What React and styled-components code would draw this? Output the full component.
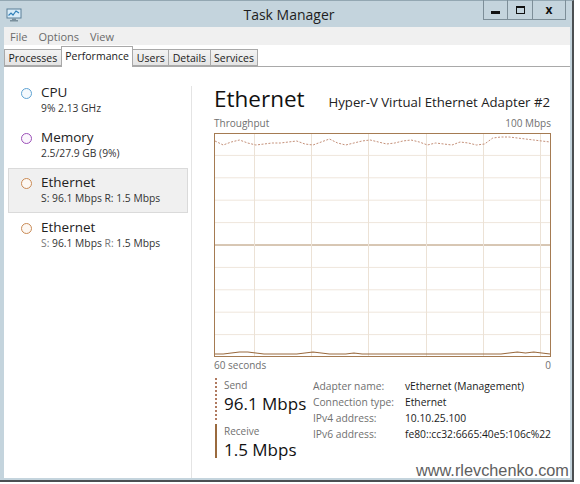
import React from 'react';
import styled, { createGlobalStyle } from 'styled-components';

const GlobalStyle = createGlobalStyle`
  html, body {
    margin: 0;
    background: #ffffff;
  }
  body {
    font-family: "Open Sans", "Noto Sans", sans-serif;
    color: #222;
  }
`;

const Screen = styled.div`
  position: relative;
  width: 580px;
  height: 484px;
  overflow: hidden;
`;

const Window = styled.div`
  width: 574px;
  height: 482px;
  box-sizing: border-box;
  background: #c4d4dd;
  border-top: 1px solid #93a7b2;
  border-right: 2px solid #4b4f52;
  border-bottom: 2px solid #4b4f52;
  padding: 0 2px 2px 4px;
  display: flex;
  flex-direction: column;
`;

const TitleBar = styled.div`
  height: 26px;
  display: grid;
  grid-template-columns: 1fr auto 1fr;
  align-items: center;
`;

const AppIcon = styled.div`
  display: flex;
  padding-left: 2px;
  padding-top: 2px;
`;

const Title = styled.div`
  font-size: 14px;
  color: #1e1e1e;
  padding-top: 1px;
  padding-left: 4px;
`;

const Controls = styled.div`
  justify-self: end;
  align-self: start;
  display: flex;
  height: 19px;
  margin-top: -1px;
  margin-right: 4px;
  border: 1px solid #7d8e98;
  border-top: none;
`;

const ControlButton = styled.div`
  width: ${p => p.$w}px;
  display: flex;
  align-items: center;
  justify-content: center;
  border-left: ${p => (p.$first ? 'none' : '1px solid #7d8e98')};
  font-size: 12px;
  font-weight: 700;
  color: #111;
`;

const MinBar = styled.div`
  width: 9px;
  height: 3px;
  background: #111;
  margin-top: 5px;
`;

const MaxBox = styled.div`
  width: 7px;
  height: 5px;
  border: 1px solid #111;
  border-top-width: 2px;
`;

const MenuBar = styled.div`
  height: 18px;
  background: #f0f0f0;
  display: flex;
  align-items: center;
  gap: 11px;
  padding-left: 6px;
  font-size: 11px;
  color: #6a6a6a;
`;

const TabStrip = styled.div`
  height: 22px;
  background: #ffffff;
  display: flex;
  align-items: flex-end;
  padding-left: 1px;
  border-bottom: 1px solid #a9a9a9;
  box-sizing: border-box;
`;

const Tab = styled.div`
  height: ${p => (p.$active ? 21 : 17)}px;
  box-sizing: border-box;
  padding: 0 3.5px;
  margin-left: -1px;
  margin-bottom: ${p => (p.$active ? -1 : 0)}px;
  display: flex;
  align-items: center;
  font-size: 10.5px;
  color: #1a1a1a;
  border: 1px solid #a9a9a9;
  border-bottom: ${p => (p.$active ? 'none' : '1px solid #a9a9a9')};
  background: ${p => (p.$active ? '#ffffff' : 'linear-gradient(#f3f3f3, #e4e4e4)')};
  position: relative;
  z-index: ${p => (p.$active ? 1 : 0)};
  padding-bottom: ${p => (p.$active ? 3 : 0)}px;
`;

const Body = styled.div`
  flex: 1;
  background: #ffffff;
  display: flex;
`;

const Sidebar = styled.div`
  width: 187px;
  flex-shrink: 0;
  padding-top: 11px;
  display: flex;
  flex-direction: column;
  align-items: flex-start;
`;

const Divider = styled.div`
  width: 1px;
  flex-shrink: 0;
  margin-top: 19px;
  background: #e4e4e4;
`;

const Item = styled.div`
  width: 180px;
  height: 45px;
  margin-left: 4px;
  box-sizing: border-box;
  padding: 4px 0 0 12px;
  display: flex;
  gap: 9px;
  background: ${p => (p.$selected ? '#f0f0f0' : 'transparent')};
  border: 1px solid ${p => (p.$selected ? '#dadada' : 'transparent')};
`;

const Dot = styled.div`
  width: 9px;
  height: 9px;
  margin-top: 5px;
  border-radius: 50%;
  border: 1.3px solid ${p => p.$color};
  background: ${p => p.$fill};
`;

const ItemText = styled.div`
  display: flex;
  flex-direction: column;
`;

const ItemTitle = styled.div`
  font-size: 13.5px;
  line-height: 18px;
  color: #222;
`;

const ItemSub = styled.div`
  font-size: 10.3px;
  line-height: 14px;
  color: #333;
`;

const Dim = styled.span`
  color: #777;
`;

const Main = styled.div`
  flex: 1;
  min-width: 0;
  padding: 16px 19px 0 22px;
  display: flex;
  flex-direction: column;
`;

const Header = styled.div`
  display: flex;
  justify-content: space-between;
  align-items: baseline;
`;

const BigTitle = styled.div`
  font-size: 22.5px;
  line-height: 32px;
  color: #111;
`;

const Adapter = styled.div`
  font-size: 13.2px;
  color: #222;
  padding-right: 1px;
`;

const AxisRow = styled.div`
  display: flex;
  justify-content: space-between;
  font-size: 10px;
  line-height: 13px;
  color: #707070;
  margin-top: ${p => p.$mt}px;
`;

const Graph = styled.svg`
  display: block;
  margin-top: 3px;
`;

const Details = styled.div`
  display: flex;
  margin-top: 6px;
`;

const Rates = styled.div`
  width: 99px;
  display: flex;
  flex-direction: column;
  gap: 4px;
`;

const Rate = styled.div`
  padding-left: 7px;
  border-left: 2px ${p => (p.$dotted ? 'dotted #b07a60' : 'solid #9a6a3e')};
  margin-left: 1px;
  height: ${p => p.$h}px;
`;

const RateLabel = styled.div`
  font-size: 10px;
  line-height: 14px;
  color: #707070;
`;

const RateValue = styled.div`
  font-size: 17px;
  line-height: 24px;
  color: #111;
`;

const InfoGrid = styled.div`
  display: grid;
  grid-template-columns: 92px auto;
  grid-auto-rows: 16px;
  align-items: center;
  font-size: 10.3px;
  align-self: flex-start;
`;

const InfoLabel = styled.div`
  color: #707070;
`;

const InfoValue = styled.div`
  color: #1a1a1a;
`;

const Watermark = styled.div`
  position: absolute;
  left: 416px;
  top: 461px;
  font-family: "Liberation Sans", Arial, sans-serif;
  font-size: 16.3px;
  color: #5e5e5e;
`;

const items = [
  { title: 'CPU', sub: '9% 2.13 GHz', color: '#5fa3d3', fill: '#f4f9fd' },
  { title: 'Memory', sub: '2.5/27.9 GB (9%)', color: '#9b4fb8', fill: '#fbf6fd' },
  { title: 'Ethernet', rate: true, color: '#c98a55', fill: '#fdf8f3', selected: true },
  { title: 'Ethernet', rate: true, color: '#c98a55', fill: '#fdf8f3', dim: true },
];

const info = [
  ['Adapter name:', 'vEthernet (Management)'],
  ['Connection type:', 'Ethernet'],
  ['IPv4 address:', '10.10.25.100'],
  ['IPv6 address:', 'fe80::cc32:6665:40e5:106c%22'],
];

const GW = 337;
const GH = 224;
const sendVals = [8, 12, 9, 7, 10, 12, 11, 10, 10, 9, 8, 11, 12, 9, 6, 10, 12, 10, 8, 7, 9, 11, 10, 8, 7, 9, 12, 10, 11, 12, 9, 10, 12, 11, 5, 4, 4, 5, 6, 7, 8, 9];
const recvVals = [221, 221, 220, 219, 219, 220, 221, 221, 221, 221, 221, 220, 219, 220, 221, 221, 221, 220, 221, 221, 221, 221, 221, 221, 221, 221, 221, 221, 221, 221, 221, 221, 221, 221, 221, 221, 220, 219, 220, 219, 220, 221];

function line(vals) {
  const step = (GW - 2) / (vals.length - 1);
  return vals.map((v, i) => `${(1 + i * step).toFixed(1)},${v}`).join(' ');
}

function ThroughputGraph() {
  const rows = [];
  for (let i = 1; i < 10; i++) rows.push(i * (GH / 10));
  const cols = [40, 97, 154, 212, 269, 326];
  return (
    <Graph width={GW} height={GH}>
      {rows.map(y => (
        <line key={y} x1="0" x2={GW} y1={y} y2={y} stroke={y === GH / 2 ? '#b08e68' : '#efe6dc'} strokeWidth="1" />
      ))}
      {cols.map(x => (
        <line key={x} x1={x + 0.5} x2={x + 0.5} y1="0" y2={GH} stroke="#ece2d6" strokeWidth="1" />
      ))}
      <polyline points={line(sendVals)} fill="none" stroke="#c49079" strokeWidth="1" strokeDasharray="2 1.5" />
      <polyline points={line(recvVals)} fill="none" stroke="#9a6a3e" strokeWidth="1.2" />
      <rect x="0.5" y="0.5" width={GW - 1} height={GH - 1} fill="none" stroke="#a57b52" strokeWidth="1" />
    </Graph>
  );
}

export default function App() {
  return (
    <Screen>
      <GlobalStyle />
      <Window>
        <TitleBar>
          <AppIcon>
            <svg width="16" height="14" viewBox="0 0 16 14">
              <rect x="1" y="1" width="14" height="9" fill="#d9ecf8" stroke="#5a7f98" />
              <polyline points="2.5,7.5 5,5 7,7 10,3 13,5" fill="none" stroke="#2f7fb8" strokeWidth="1.2" />
              <rect x="6" y="10.5" width="4" height="1.5" fill="#7a8f9c" />
              <rect x="4" y="12" width="8" height="1.5" fill="#7a8f9c" />
            </svg>
          </AppIcon>
          <Title>Task Manager</Title>
          <Controls>
            <ControlButton $w={23} $first>
              <MinBar />
            </ControlButton>
            <ControlButton $w={24}>
              <MaxBox />
            </ControlButton>
            <ControlButton $w={32}>x</ControlButton>
          </Controls>
        </TitleBar>
        <MenuBar>
          <span>File</span>
          <span>Options</span>
          <span>View</span>
        </MenuBar>
        <TabStrip>
          <Tab>Processes</Tab>
          <Tab $active>Performance</Tab>
          <Tab>Users</Tab>
          <Tab>Details</Tab>
          <Tab>Services</Tab>
        </TabStrip>
        <Body>
          <Sidebar>
            {items.map((it, i) => (
              <Item key={i} $selected={it.selected}>
                <Dot $color={it.color} $fill={it.fill} />
                <ItemText>
                  <ItemTitle>{it.title}</ItemTitle>
                  <ItemSub>
                    {it.rate ? (
                      it.dim ? (
                        <>
                          <Dim>S:</Dim> 96.1 Mbps <Dim>R:</Dim> 1.5 Mbps
                        </>
                      ) : (
                        'S: 96.1 Mbps R: 1.5 Mbps'
                      )
                    ) : (
                      it.sub
                    )}
                  </ItemSub>
                </ItemText>
              </Item>
            ))}
          </Sidebar>
          <Divider />
          <Main>
            <Header>
              <BigTitle>Ethernet</BigTitle>
              <Adapter>Hyper-V Virtual Ethernet Adapter #2</Adapter>
            </Header>
            <AxisRow $mt={2}>
              <span>Throughput</span>
              <span>100 Mbps</span>
            </AxisRow>
            <ThroughputGraph />
            <AxisRow $mt={2}>
              <span>60 seconds</span>
              <span>0</span>
            </AxisRow>
            <Details>
              <Rates>
                <Rate $dotted $h={42}>
                  <RateLabel>Send</RateLabel>
                  <RateValue>96.1 Mbps</RateValue>
                </Rate>
                <Rate $h={34}>
                  <RateLabel>Receive</RateLabel>
                  <RateValue>1.5 Mbps</RateValue>
                </Rate>
              </Rates>
              <InfoGrid>
                {info.map(([k, v]) => (
                  <React.Fragment key={k}>
                    <InfoLabel>{k}</InfoLabel>
                    <InfoValue>{v}</InfoValue>
                  </React.Fragment>
                ))}
              </InfoGrid>
            </Details>
          </Main>
        </Body>
      </Window>
      <Watermark>www.rlevchenko.com</Watermark>
    </Screen>
  );
}
